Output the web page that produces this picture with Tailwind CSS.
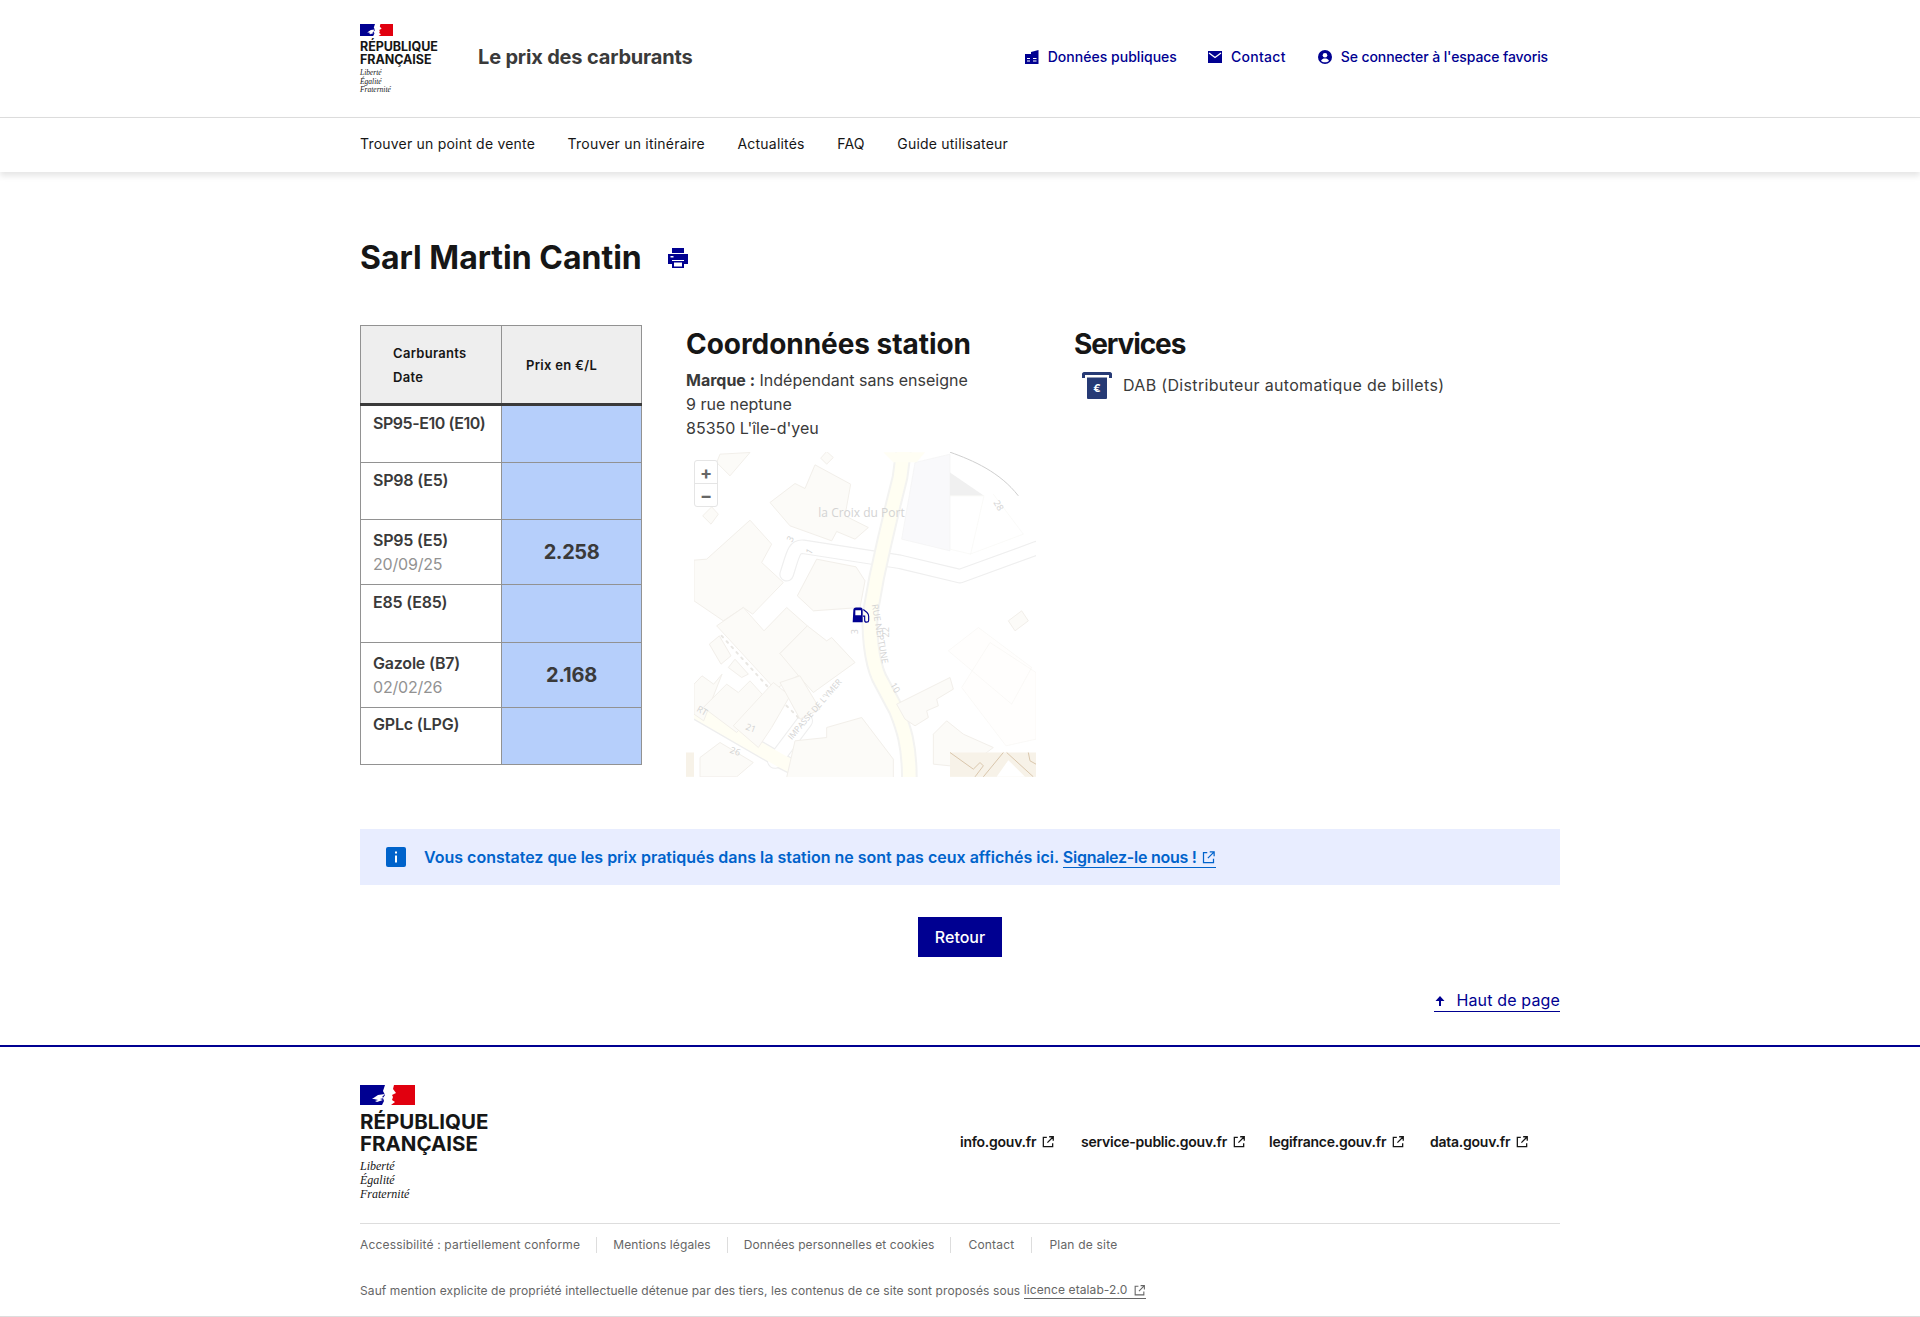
<!DOCTYPE html>
<html lang="fr">
<head>
  <meta charset="UTF-8" />
  <title>Le prix des carburants</title>
  <script src="https://cdn.jsdelivr.net/npm/@tailwindcss/browser@4"></script>
</head>
<body class="bg-white text-[#3a3a3a] font-['Inter',sans-serif]">

  <!-- header -->
  <header class="h-[118px] border-b border-[#ddd]">
    <div class="w-[1200px] mx-auto h-full flex items-start">
      <div class="w-[118px] pt-[24px]">
        <svg width="33" height="12" viewBox="0 0 55 20" class="block">
          <rect width="55" height="20" fill="#fff"/>
          <path d="M0 0h25l-2 6 2 4-2 3 1 3-2 4H0z" fill="#000091"/>
          <path d="M34 0h21v20H31l4-3-3-2 1-3-1-2 4-2-3-4z" fill="#e1000f"/>
          <path d="M12 14l6-4 7-1-3 3 2 1-4 1 3 1-6 2-2-1 3-1-4-1z" fill="#fff"/>
        </svg>
        <div class="mt-[4px] text-[12.5px] leading-[13px] font-bold text-[#161616] tracking-[-0.05px] whitespace-nowrap">RÉPUBLIQUE<br>FRANÇAISE</div>
        <div class="mt-[3px] font-['Liberation_Serif',serif] italic text-[7.5px] leading-[8.5px] text-[#161616]">Liberté<br>Égalité<br>Fraternité</div>
      </div>
      <div class="pt-[45px] text-[20px] leading-[25px] font-bold text-[#3a3a3a] tracking-[-0.18px]">Le prix des carburants</div>
      <nav class="ml-auto flex items-center pt-[47px] pr-[12px] text-[14px] leading-[20px] font-medium text-[#000091]">
        <svg class="w-[14px] h-[14px] mr-[9px]" viewBox="0 0 14 14" fill="#000091"><path d="M0 4h6V2L13.500 0v14H0z"/><path d="M2 8h3v1H2zM2 10.500h3v1H2zM8 8h3.500v1H8zM8 10.500h3.500v1H8z" fill="#fff"/></svg>
        <span class="tracking-[0.03px]">Données publiques</span>
        <svg class="w-[14px] h-[14px] ml-[31px] mr-[9px]" viewBox="0 0 14 14"><rect y="1" width="14" height="12" fill="#000091"/><path d="M1 3l6 4.500L13 3" fill="none" stroke="#fff" stroke-width="1.300"/></svg>
        <span class="tracking-[0.3px]">Contact</span>
        <svg class="w-[14px] h-[14px] ml-[32px] mr-[9px]" viewBox="0 0 14 14"><circle cx="7" cy="7" r="7" fill="#000091"/><circle cx="7" cy="5.200" r="2.300" fill="#fff"/><path d="M3 10.800c.8-1.700 2.300-2.300 4-2.300s3.200.6 4 2.300c-1 1-2.500 1.500-4 1.500s-3-.5-4-1.500z" fill="#fff"/></svg>
        <span class="tracking-[-0.1px]">Se connecter à l'espace favoris</span>
      </nav>
    </div>
  </header>

  <div class="h-[54px] shadow-[0_4px_6px_rgba(0,0,0,0.1)]">
    <ul class="w-[1200px] mx-auto flex gap-[32.5px] text-[14px] leading-[52px] text-[#161616] tracking-[0.21px]">
      <li>Trouver un point de vente</li>
      <li>Trouver un itinéraire</li>
      <li>Actualités</li>
      <li>FAQ</li>
      <li>Guide utilisateur</li>
    </ul>
  </div>

  <main class="w-[1200px] mx-auto">
    <div class="pt-[66px] flex items-center h-[106px]">
      <h1 class="text-[32px] leading-[40px] font-bold text-[#161616] tracking-[0px]">Sarl Martin Cantin</h1>
      <svg class="ml-[25px] w-[22px] h-[22px]" viewBox="0 0 22 22" fill="#000091"><path d="M5 1h12v5H5z"/><path d="M1 7h20v10h-4v-4H5v4H1z"/><path d="M5 14h12v7H5z"/><path d="M7 15.500h8v4H7z" fill="#fff"/><rect x="3.500" y="9" width="3" height="1.500" fill="#fff"/></svg>
    </div>

    <div class="flex mt-[47px] h-[453px]">
      <table class="w-[282px] h-[440px] table-fixed border-collapse self-start text-[16px] leading-[24px]">
        <thead>
          <tr class="h-[79px] bg-[#eee] text-[13px] font-semibold text-[#161616] tracking-[0.3px]">
            <th class="w-[141px] border border-[#929292] border-b-[3px] border-b-[#3a3a3a] pl-[32px] text-left font-semibold leading-[24px]">Carburants<br>Date</th>
            <th class="border border-[#929292] border-b-[3px] border-b-[#3a3a3a] pl-[24px] text-left font-semibold">Prix en €/L</th>
          </tr>
        </thead>
        <tbody class="tracking-[-0.2px]">
          <tr class="h-[58px]">
            <td class="border border-[#929292] pl-[12px] pt-[5px] align-top font-semibold whitespace-nowrap tracking-[-0.45px]">SP95-E10 (E10)</td>
            <td class="border border-[#929292] bg-[#b6cffb]"></td>
          </tr>
          <tr class="h-[57px]">
            <td class="border border-[#929292] pl-[12px] pt-[5px] align-top font-semibold">SP98 (E5)</td>
            <td class="border border-[#929292] bg-[#b6cffb]"></td>
          </tr>
          <tr class="h-[65px]">
            <td class="border border-[#929292] pl-[12px] pt-[8px] align-top font-semibold">SP95 (E5)<div class="font-normal text-[#929292]">20/09/25</div></td>
            <td class="border border-[#929292] bg-[#b6cffb] text-center text-[20px] font-bold tracking-[-0.4px]">2.258</td>
          </tr>
          <tr class="h-[57px]">
            <td class="border border-[#929292] pl-[12px] pt-[5px] align-top font-semibold">E85 (E85)</td>
            <td class="border border-[#929292] bg-[#b6cffb]"></td>
          </tr>
          <tr class="h-[65px]">
            <td class="border border-[#929292] pl-[12px] pt-[8px] align-top font-semibold">Gazole (B7)<div class="font-normal text-[#929292]">02/02/26</div></td>
            <td class="border border-[#929292] bg-[#b6cffb] text-center text-[20px] font-bold tracking-[-0.2px]">2.168</td>
          </tr>
          <tr class="h-[57px]">
            <td class="border border-[#929292] pl-[12px] pt-[4px] align-top font-semibold">GPLc (LPG)</td>
            <td class="border border-[#929292] bg-[#b6cffb]"></td>
          </tr>
        </tbody>
      </table>

      <section class="ml-[44px] w-[350px]">
        <h2 class="text-[28px] leading-[36px] mt-[1px] font-bold text-[#161616] tracking-[-0.05px] whitespace-nowrap">Coordonnées station</h2>
        <p class="mt-[6px] text-[16px] leading-[24px]"><b class="font-bold">Marque :</b> Indépendant sans enseigne<br>9 rue neptune<br>85350 L'île-d'yeu</p>
        <div class="relative mt-[12px] w-[350px] h-[325px] overflow-hidden">
          <svg width="350" height="325" viewBox="18 24 1050 974" class="block">
            <rect x="18" y="24" width="1050" height="974" fill="#fff"/>
            <!-- right light tile -->
            <path d="M665 285L705 55l105-25v290z" fill="#f9f9fb" stroke="#f3f3f3" stroke-width="2"/>
            <path d="M810 85l102 70H810z" fill="#f0f0f0"/>
            <path d="M810 24c70 25 150 60 205 131" fill="none" stroke="#cfcfcf" stroke-width="3"/>
            <path d="M810 155h102l-40 175-62-15M870 330l160-60-90-120" fill="none" stroke="#f8f7f5" stroke-width="2"/>
            <path d="M805 620l90-70 160 120-60 110zM845 730l85-135 138 90v200l-90 20z" fill="#fffefd" stroke="#f7f6f3" stroke-width="2"/>
            <!-- roads -->
            <g fill="none" stroke-linejoin="round" stroke-linecap="round">
              <path d="M1070 312L840 396 660 353 370 308c-28-3-30 20-50 82" stroke="#efefef" stroke-width="44"/>
              <path d="M1070 312L840 396 660 353 370 308c-28-3-30 20-50 82" stroke="#fff" stroke-width="37"/>
              <path d="M42 800l260 150 120 60M375 830L285 950" stroke="#eee" stroke-width="48"/>
              <path d="M375 830L285 950" stroke="#fff" stroke-width="42"/>
              <path d="M42 800l260 150 120 60" stroke="#fffef4" stroke-width="40"/>
              <path d="M670 24L660 100 640 180 612 300 590 400 572 500C565 560 575 650 597 700L650 800C670 850 688 900 688 1000" stroke="#f3f3f1" stroke-width="50"/>
              <path d="M670 24L660 100 640 180 612 300 590 400 572 500C565 560 575 650 597 700L650 800C670 850 688 900 688 1000" stroke="#fffef2" stroke-width="38"/>
              <path d="M125 575l145 160 90 90" stroke="#e9e7e3" stroke-width="6" stroke-dasharray="6 16"/>
            </g>
            <path d="M610 24h125l-25 30h-70z" fill="#fffef4"/>
            <!-- buildings -->
            <g fill="#fcfbf8" stroke="#f2efea" stroke-width="3">
              <path d="M270 175l75-57 30 15 30-71 107 58-17 95 70 35-40 35-55-23-15 28-125-45z"/>
              <path d="M42 348l38-3 130-117 65 72-30 55 65 60-92 95-28-20-60 40-88-60z"/>
              <path d="M352 455l58-110 118 23 27 42-15 80-140 10z"/>
              <path d="M110 545l80-55 62 70 68-70 62 55-82 83 62 62-77 45z"/>
              <path d="M300 628l82-83 58 45 15-10 70 75-125 90-40-45z"/>
              <path d="M42 720l24-25 35 25 25-30-55 140-29-20z"/>
              <path d="M70 790l70-70 35 25 35-35 50 55-90 100z"/>
              <path d="M160 845l120-130 50 40-55 95-40 60z"/>
              <path d="M88 600l30-25 35 60-30 25zM145 670l20-25 40 45-20 10z"/>
              <path d="M300 715l60-20 60 100-60 30z"/>
              <path d="M650 780l160-80 10 35-50 30 5 20-35 15 5 20-40 25-30-20z"/>
              <path d="M345 890l95-10 0-30 105-30 95 125 0 55H320z"/>
              <path d="M60 940l60-45 100 60-50 43H60z"/>
              <path d="M440 22l20 18-20 20-18-18zM95 188l20 22-22 30-25-25zM120 30l90-5-60 70-40-40zM985 530l40-30 20 30-40 30zM760 870l40-40 50 40 90 40-80 60-100-10z"/>
            </g>
            <!-- white cover for unloaded tile on the left -->
            <rect x="18" y="300" width="24" height="620" fill="#fff"/>
            <!-- loaded tile bottom right -->
            <rect x="810" y="925" width="258" height="73" fill="#f7f2e8"/>
            <path d="M810 925l70 50 20-20 10 10-25 33M910 998l60-73M980 925l80 73M1045 925l5 25 18 10" fill="none" stroke="#d9c6ac" stroke-width="3"/>
            <path d="M950 998l35-50 50 50z" fill="#fff"/>
            <rect x="18" y="925" width="24" height="73" fill="#f7f2e8"/>
            <!-- labels -->
            <g fill="#d3d3d3" font-family="'Open Sans',sans-serif">
              <text x="415" y="220" font-size="36">la Croix du Port</text>
              <g font-size="27">
                <text transform="translate(575 482) rotate(80)">RUE NEPTUNE</text>
                <text transform="translate(335 888) rotate(-49)" font-size="25">IMPASSE DE L'YMER</text>
                <text transform="translate(535 570) rotate(-90)">3</text>
                <text transform="translate(628 580) rotate(-90)">22</text>
                <text transform="translate(630 722) rotate(60)">10</text>
                <text transform="translate(335 296) rotate(-60)">3</text>
                <text transform="translate(392 333) rotate(-60)">1</text>
                <text transform="translate(195 855) rotate(20)">21</text>
                <text transform="translate(148 925) rotate(20)">26</text>
                <text transform="translate(48 800) rotate(30)">RT</text>
                <text transform="translate(940 175) rotate(60)">28</text>
              </g>
            </g>
            <!-- station marker -->
            <path d="M520 498c0-5 3-8 8-8h14c4 0 6 3 6 7v37h-30zM526 498v15h17v-15z" fill="#000091" fill-rule="evenodd"/>
            <path d="M550 496l11 9c4 4 5 7 5 11v13c0 3-3 5-6 5-4 0-6-3-6-6v-12h-5" fill="none" stroke="#000091" stroke-width="3.500"/>
          </svg>
          <div class="absolute left-[8px] top-[8px] w-[24px] h-[47px] bg-white border border-[#e5e5e5] rounded-[3px] text-[#666] text-[18px] font-bold leading-[23px] text-center">
            <div class="h-[23px] border-b border-[#e5e5e5]">+</div>
            <div>−</div>
          </div>
        </div>
      </section>

      <section class="ml-[38px]">
        <h2 class="text-[28px] leading-[36px] mt-[1px] font-bold text-[#161616] tracking-[-1.1px]">Services</h2>
        <div class="mt-[9px] ml-[7px] flex items-center gap-[10px]">
          <svg width="32" height="28" viewBox="0 0 32 28"><path d="M1 7V3c0-1 1-2 2-2h26c1 0 2 1 2 2v4h-3V4H4v3z" fill="#263a75"/><rect x="6" y="4" width="20" height="24" rx="1" fill="#263a75"/><rect x="4" y="4" width="24" height="2.500" fill="#fff"/><text x="16" y="21" text-anchor="middle" fill="#fff" font-size="11" font-weight="700">€</text></svg>
          <span class="text-[16px] leading-[24px] whitespace-nowrap tracking-[0.33px]">DAB (Distributeur automatique de billets)</span>
        </div>
      </section>
    </div>

    <div class="mt-[51px] h-[56px] bg-[#e8edff] flex items-center pl-[26px] text-[16px] font-semibold text-[#0063cb]">
      <svg class="w-[20px] h-[20px] mr-[18px]" viewBox="0 0 20 20"><rect width="20" height="20" rx="2" fill="#0063cb"/><path d="M9 4.500h2v2H9zM9 8.500h2v7H9z" fill="#fff"/></svg>
      <span>Vous constatez que les prix pratiqués dans la station ne sont pas ceux affichés ici. <a href="#" class="border-b border-[#0063cb] tracking-[-0.25px]">Signalez-le nous !<svg class="inline w-[15px] h-[15px] ml-[4px] align-[-2px]" viewBox="0 0 24 24" fill="none" stroke="#0063cb" stroke-width="2"><path d="M10 4H4v16h16v-6M14 3h7v7M21 3l-10 10"/></svg></a></span>
    </div>

    <div class="mt-[32px] flex justify-center">
      <button class="w-[84px] h-[40px] bg-[#000091] text-white text-[16px] font-medium">Retour</button>
    </div>

    <div class="mt-[33px] h-[24px] flex justify-end">
      <a href="#" class="flex items-center text-[16px] leading-[21px] h-[21px] text-[#000091] border-b border-[#000091] box-content tracking-[0.15px]">
        <svg class="w-[12px] h-[12px] mr-[10px]" viewBox="0 0 12 12" fill="#000091"><path d="M6 1l4.500 5H7v5H5V6H1.500z"/></svg>
        Haut de page
      </a>
    </div>
  </main>

  <footer class="mt-[31px] border-t-2 border-[#000091]">
    <div class="w-[1200px] mx-auto">
      <div class="h-[177px] pt-[38px] flex items-start border-b border-[#ddd]">
        <div class="w-[600px]">
          <svg width="55" height="20" viewBox="0 0 55 20" class="block">
            <rect width="55" height="20" fill="#fff"/>
            <path d="M0 0h25l-2 6 2 4-2 3 1 3-2 4H0z" fill="#000091"/>
            <path d="M34 0h21v20H31l4-3-3-2 1-3-1-2 4-2-3-4z" fill="#e1000f"/>
            <path d="M12 14l6-4 7-1-3 3 2 1-4 1 3 1-6 2-2-1 3-1-4-1z" fill="#fff"/>
          </svg>
          <div class="mt-[6px] text-[20.500px] leading-[22px] font-bold text-[#161616] tracking-[0px]">RÉPUBLIQUE<br>FRANÇAISE</div>
          <div class="mt-[4px] font-['Liberation_Serif',serif] italic text-[12px] leading-[14px] text-[#161616]">Liberté<br>Égalité<br>Fraternité</div>
        </div>
        <ul class="pt-[45px] flex text-[14px] leading-[24px] font-semibold text-[#161616] tracking-[-0.25px]">
          <li class="w-[121px] flex items-center gap-[5px]">info.gouv.fr<svg class="w-[14px] h-[14px]" viewBox="0 0 24 24" fill="none" stroke="#161616" stroke-width="2.200"><path d="M10 4H4v16h16v-6M14 3h7v7M21 3l-10 10"/></svg></li>
          <li class="w-[188px] flex items-center gap-[5px]">service-public.gouv.fr<svg class="w-[14px] h-[14px]" viewBox="0 0 24 24" fill="none" stroke="#161616" stroke-width="2.200"><path d="M10 4H4v16h16v-6M14 3h7v7M21 3l-10 10"/></svg></li>
          <li class="w-[161px] flex items-center gap-[5px]">legifrance.gouv.fr<svg class="w-[14px] h-[14px]" viewBox="0 0 24 24" fill="none" stroke="#161616" stroke-width="2.200"><path d="M10 4H4v16h16v-6M14 3h7v7M21 3l-10 10"/></svg></li>
          <li class="flex items-center gap-[5px]">data.gouv.fr<svg class="w-[14px] h-[14px]" viewBox="0 0 24 24" fill="none" stroke="#161616" stroke-width="2.200"><path d="M10 4H4v16h16v-6M14 3h7v7M21 3l-10 10"/></svg></li>
        </ul>
      </div>
      <ul class="mt-[13px] flex text-[12px] leading-[16px] text-[#666] tracking-[0.05px]">
        <li class="pr-[16px] border-r border-[#ddd] tracking-[0.17px]">Accessibilité : partiellement conforme</li>
        <li class="px-[16px] border-r border-[#ddd] tracking-[0.1px]">Mentions légales</li>
        <li class="px-[16px] border-r border-[#ddd] tracking-[0.08px]">Données personnelles et cookies</li>
        <li class="px-[17px] border-r border-[#ddd] tracking-[0.2px]">Contact</li>
        <li class="pl-[17px] tracking-[0.2px]">Plan de site</li>
      </ul>
      <p class="mt-[29px] flex items-center text-[12px] leading-[16px] text-[#666] tracking-[0.1px]">
        Sauf mention explicite de propriété intellectuelle détenue par des tiers, les contenus de ce site sont proposés sous&nbsp;
        <span class="flex items-center border-b border-[#666]">licence etalab-2.0<svg class="ml-[6px] w-[13px] h-[13px]" viewBox="0 0 24 24" fill="none" stroke="#666" stroke-width="2"><path d="M10 4H4v16h16v-6M14 3h7v7M21 3l-10 10"/></svg></span>
      </p>
    </div>
  </footer>
  <div class="absolute left-0 top-[1316px] w-full h-px bg-[#ddd]"></div>
</body>
</html>
